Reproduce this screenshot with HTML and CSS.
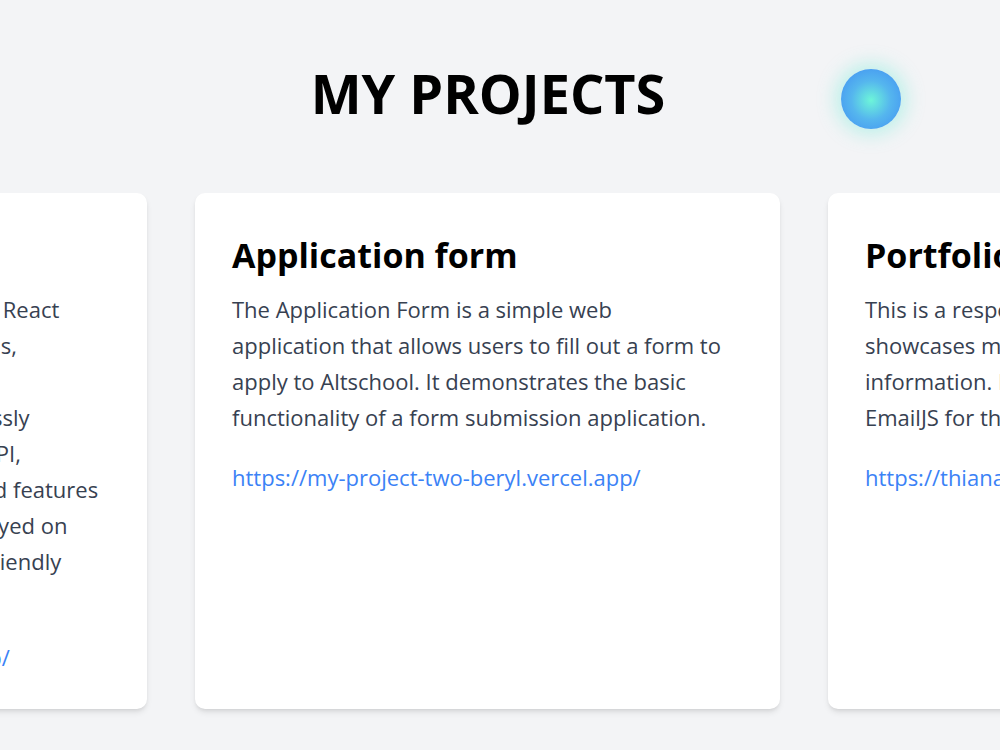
FILE: index.html
```html
<!DOCTYPE html>
<html lang="en">
<head>
    <meta charset="UTF-8">
    <meta name="viewport" content="width=device-width, initial-scale=1.0">
    <title>My Projects</title>
    <link rel="stylesheet" href="styles.css">
</head>
<body>
    <section class="projects">
        <h1 class="projects-title">MY PROJECTS</h1>
        <div class="glow-ball"></div>

        <div class="slider">
            <div class="track">
                <div class="card">
                    <h2>Movie Discovery App</h2>
                    <p>This is a movie discovery app built with React<br>
                    that lets users view popular productions,<br>
                    search titles and save favorites.<br>
                    It integrates with external data seamlessly<br>
                    using the free TMDB movie database API,<br>
                    offering all real-time data and advanced features<br>
                    The complete project is built and deployed on<br>
                    Vercel, and offers a smooth and user-friendly<br>
                    experience across all devices.</p>
                    <a href="#">https://movie-discovery-web.vercel.app/</a>
                </div>
                <div class="card">
                    <h2>Application form</h2>
                    <p>The Application Form is a simple web<br>
                    application that allows users to fill out a form to<br>
                    apply to Altschool. It demonstrates the basic<br>
                    functionality of a form submission application.</p>
                    <a href="#">https://my-project-two-beryl.vercel.app/</a>
                </div>
                <div class="card">
                    <h2>Portfolio website</h2>
                    <p>This is a responsive portfolio website that<br>
                    showcases my skills, projects and contact<br>
                    information. It is built with React and uses<br>
                    EmailJS for the contact form.</p>
                    <a href="#">https://thianah-portfolio.vercel.app/</a>
                </div>
            </div>
        </div>
    </section>
</body>
</html>
```

FILE: styles.css
```css
* {
    box-sizing: border-box;
}

body {
    margin: 0;
    background-color: #f3f4f6;
    font-family: "Open Sans", "Noto Sans", sans-serif;
    overflow: hidden;
}

.projects {
    position: relative;
    padding-top: 61px;
}

.projects-title {
    margin: 0;
    text-align: center;
    font-size: 54px;
    font-weight: 700;
    line-height: 64px;
    color: #000;
    padding-right: 24px;
}

.glow-ball {
    position: absolute;
    left: 841px;
    top: 69px;
    width: 60px;
    height: 60px;
    border-radius: 50%;
    background: radial-gradient(circle at 50% 52%, #6df5d9 0%, #55b6ee 45%, #3f8cf4 100%);
    box-shadow: 0 0 18px 6px rgba(94, 234, 212, 0.35);
}

.slider {
    margin-top: 68px;
    overflow: hidden;
    padding-bottom: 40px;
}

.track {
    display: flex;
    gap: 48px;
    margin-left: -438px;
}

.card {
    flex: 0 0 585px;
    height: 516px;
    background: #fff;
    border-radius: 10px;
    padding: 40px 20px 36px 37px;
    box-shadow: 0 4px 6px -1px rgba(0, 0, 0, 0.1), 0 2px 4px -2px rgba(0, 0, 0, 0.1);
    white-space: nowrap;
}

.card h2 {
    margin: 0 0 14px;
    font-size: 34px;
    line-height: 44px;
    font-weight: 700;
    color: #000;
}

.card p {
    margin: 0 0 24px;
    font-size: 22px;
    line-height: 36px;
    color: #374151;
}

.card a {
    font-size: 22px;
    line-height: 36px;
    color: #3b82f6;
    text-decoration: none;
}
```
